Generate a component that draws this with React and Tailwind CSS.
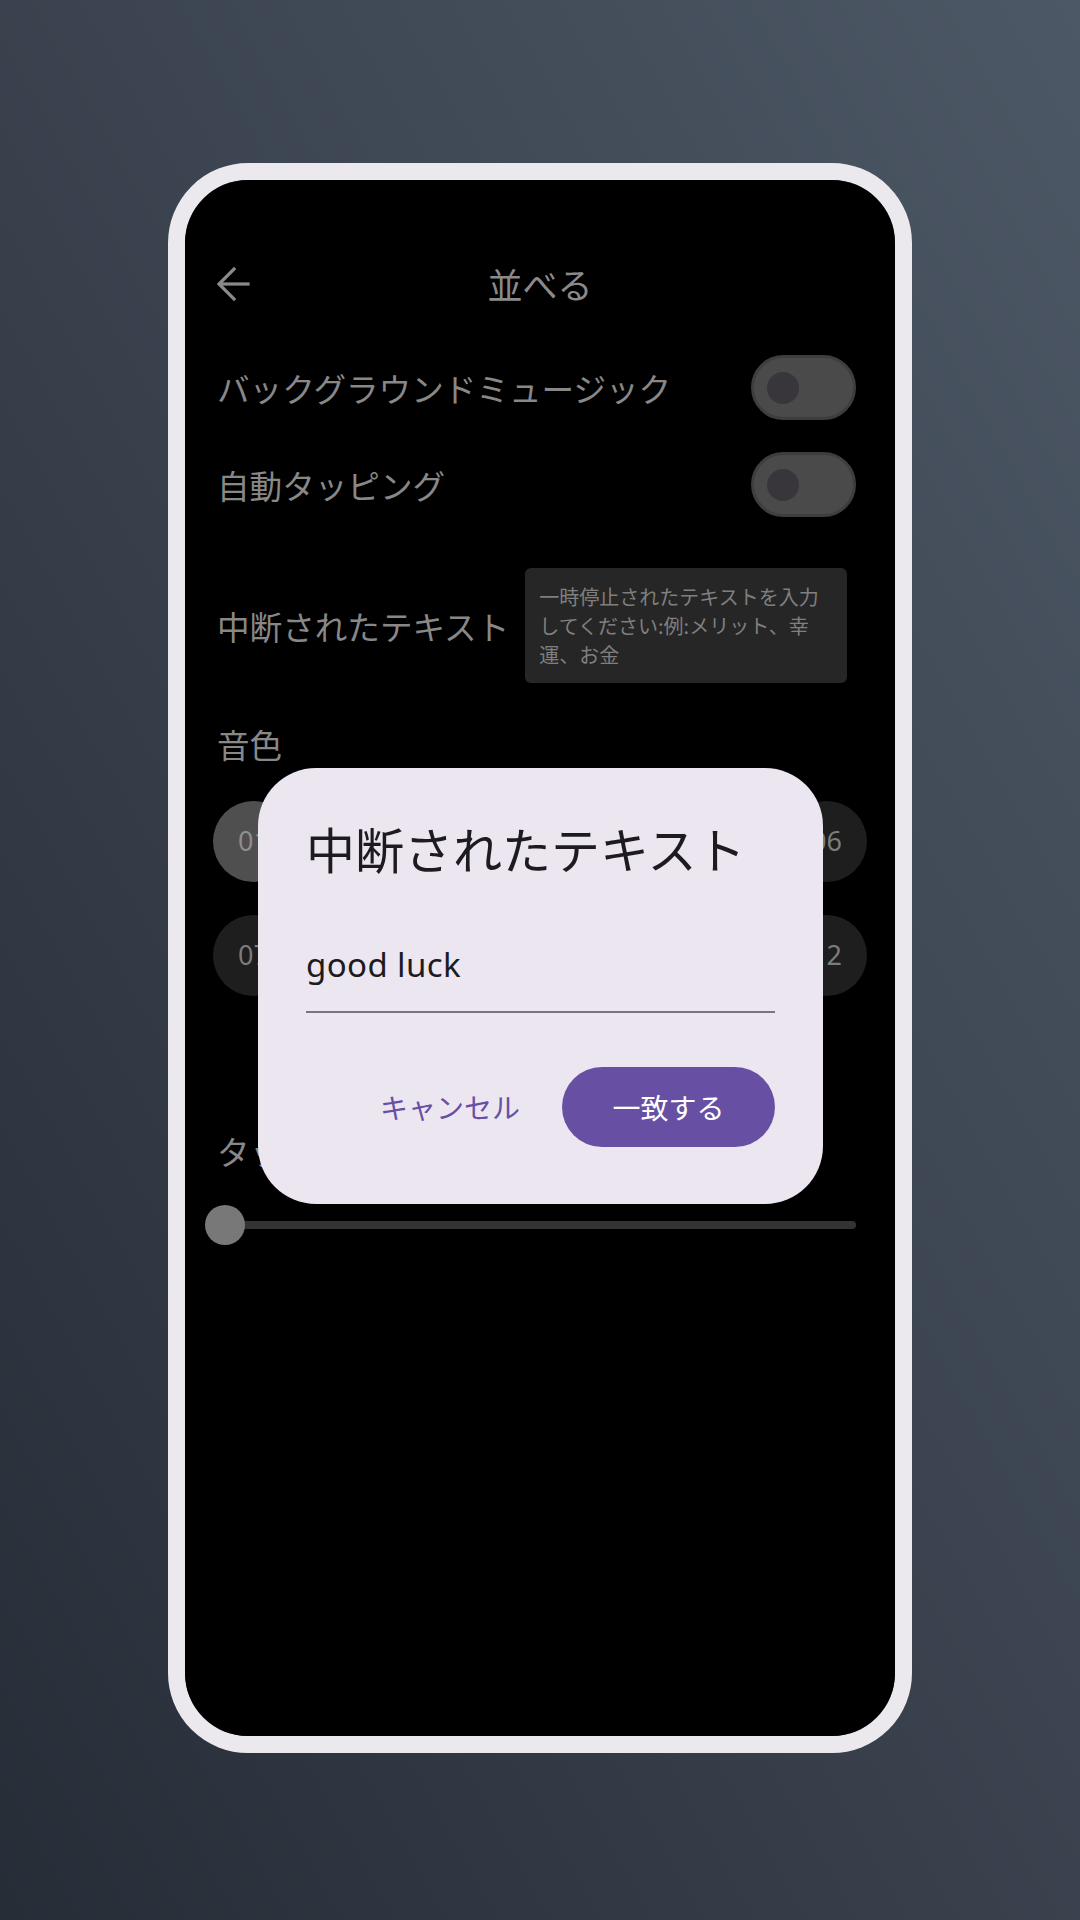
import React from "react";

const CJK = { fontFamily: '"Noto Sans CJK JP", "Noto Sans", sans-serif' };
const LATIN = { fontFamily: '"Noto Sans", "Noto Sans CJK JP", sans-serif' };

function Toggle() {
  return (
    <div className="flex h-[65px] w-[105px] items-center rounded-full border-[3px] border-[#3e3e3e] bg-[#4a4a4a] pl-[13px]">
      <div className="h-[32px] w-[32px] rounded-full bg-[#38363b]" />
    </div>
  );
}

function Chip({ label, active }) {
  return (
    <div
      className={
        active
          ? "flex h-[81px] w-[81px] items-center justify-center rounded-full bg-[#4f4f4f] text-[27px] text-[#8e8e8e]"
          : "flex h-[81px] w-[81px] items-center justify-center rounded-full bg-[#1e1e1e] text-[27px] text-[#7c7c7c]"
      }
      style={LATIN}
    >
      {label}
    </div>
  );
}

export default function App() {
  const row1 = ["01", "02", "03", "04", "05", "06"];
  const row2 = ["07", "08", "09", "10", "11", "12"];

  return (
    <div
      className="flex h-[1920px] w-[1080px] justify-center bg-linear-to-bl from-[#4d5866] to-[#272d37] pt-[163px]"
      style={CJK}
    >
      <div className="h-[1590px] w-[744px] rounded-[80px] border-[17px] border-[#ebe9ee]">
        <div className="relative flex h-full w-full flex-col overflow-hidden rounded-[63px] bg-black pt-[72px]">
          {/* header */}
          <div className="relative flex h-[64px] items-center justify-center">
            <svg
              className="absolute left-[31px] top-[15px]"
              width="34"
              height="34"
              viewBox="0 0 34 34"
              fill="none"
              stroke="#8a8a8a"
              strokeWidth="3.2"
              strokeLinecap="square"
            >
              <path d="M32 17H4" />
              <path d="M18 2L3 17l15 15" />
            </svg>
            <span className="text-[35px] leading-[64px] text-[#8a8a8a]">並べる</span>
          </div>

          <div className="mt-[39px] flex h-[65px] items-center justify-between pl-[32px] pr-[39px]">
            <span className="text-[32.6px] leading-[40px] text-[#888]">バックグラウンドミュージック</span>
            <Toggle />
          </div>

          <div className="mt-[32px] flex h-[65px] items-center justify-between pl-[32px] pr-[39px]">
            <span className="text-[32.6px] leading-[40px] text-[#888]">自動タッピング</span>
            <Toggle />
          </div>

          <div className="mt-[51px] flex h-[115px] items-center pl-[32px]">
            <span className="text-[32.6px] leading-[40px] text-[#888]">中断されたテキスト</span>
            <div className="ml-[16px] h-[115px] w-[322px] rounded-[6px] bg-[#262626] p-[14px] text-[20px] leading-[29px] text-[#7f7f7f]">
              一時停止されたテキストを入力
              <br />
              してください:例:メリット、幸
              <br />
              運、お金
            </div>
          </div>

          <div className="mt-[41px] pl-[32px] text-[32.6px] leading-[40px] text-[#888]">音色</div>

          <div className="mt-[37px] flex justify-between px-[28px]">
            {row1.map((c, i) => (
              <Chip key={c} label={c} active={i === 0} />
            ))}
          </div>
          <div className="mt-[33px] flex justify-between px-[28px]">
            {row2.map((c) => (
              <Chip key={c} label={c} />
            ))}
          </div>

          <div className="mt-[135px] pl-[32px] text-[32.6px] leading-[40px] text-[#888]">タップ間隔</div>

          <div className="relative mt-[34px] ml-[20px] mr-[39px] h-[40px]">
            <div className="absolute left-[20px] right-0 top-[16px] h-[8px] rounded-full bg-[#333]" />
            <div className="absolute left-0 top-0 h-[40px] w-[40px] rounded-full bg-[#787878]" />
          </div>

          {/* dialog */}
          <div className="absolute left-[73px] top-[588px] w-[565px] rounded-[58px] bg-[#ece6f0] px-[48px] pb-[57px] pt-[51px]">
            <div className="text-[49px] leading-[58px] text-[#1d1b20]">中断されたテキスト</div>
            <div
              className="mt-[68px] border-b-2 border-[#79747e] pb-[26px] text-[33px] leading-[40px] tracking-[0.4px] text-[#1d1b20]"
              style={LATIN}
            >
              good luck
            </div>
            <div className="mt-[54px] flex items-center justify-end">
              <span className="mr-[42px] text-[28px] text-[#6750a4]">キャンセル</span>
              <div className="flex h-[80px] w-[213px] items-center justify-center rounded-full bg-[#6750a4] text-[28px] text-white">
                一致する
              </div>
            </div>
          </div>
        </div>
      </div>
    </div>
  );
}
